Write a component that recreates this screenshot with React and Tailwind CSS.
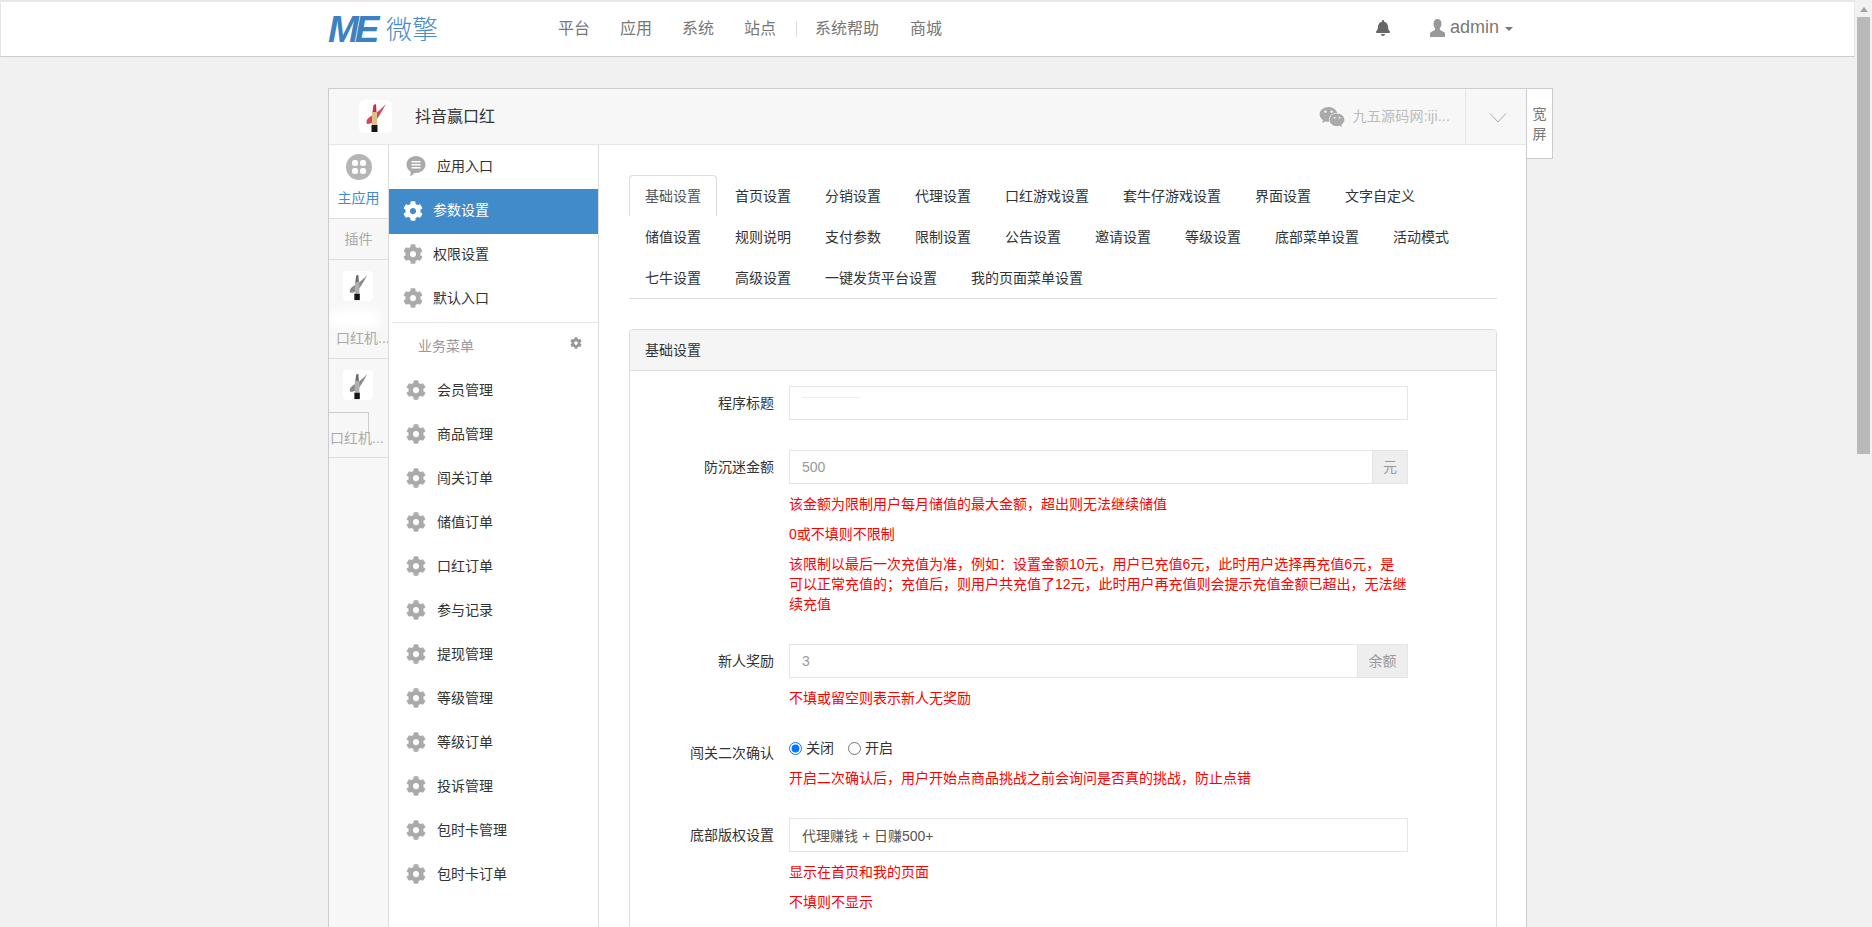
import { FaBell, FaCog, FaWeixin } from 'react-icons/fa';

const font = "font-['Liberation_Sans','Noto_Sans_CJK_SC',sans-serif]";

const tabRows = [
  ['基础设置', '首页设置', '分销设置', '代理设置', '口红游戏设置', '套牛仔游戏设置', '界面设置', '文字自定义'],
  ['储值设置', '规则说明', '支付参数', '限制设置', '公告设置', '邀请设置', '等级设置', '底部菜单设置', '活动模式'],
  ['七牛设置', '高级设置', '一键发货平台设置', '我的页面菜单设置'],
];

const bizMenu = ['会员管理', '商品管理', '闯关订单', '储值订单', '口红订单', '参与记录', '提现管理', '等级管理', '等级订单', '投诉管理', '包时卡管理', '包时卡订单'];

// little lipstick logo, red in the header and grey in the side strip
const Lipstick = ({ grey = false, size = 33 }) => (
  <svg width={size} height={size} viewBox="0 0 33 33" className="shrink-0">
    <rect width="33" height="33" rx="5" fill="#fff" />
    <path d="M27 4C24 9 20 17 17 20C14 23 11 24 8 24C6 20 10 17 14 15C19 12 23 8 27 4Z" fill={grey ? '#8a8a8a' : '#d8455f'} />
    <path d="M13.5 12L14.5 5L17 4L17.5 12Z" fill={grey ? '#6e6e6e' : '#c2304c'} />
    <rect x="13" y="12" width="5" height="13" fill={grey ? '#b0b0b0' : '#dcc08a'} />
    <rect x="12.500" y="25" width="6" height="7" fill="#151515" />
  </svg>
);

const MenuRow = ({ label }) => (
  <div className="flex h-[44px] items-center gap-[11px] pl-[17px] text-[14px] text-[#333]">
    <FaCog className="text-[20px] text-[#aaa]" />
    <span>{label}</span>
  </div>
);

const Help = ({ children }) => <p className="mt-[10px] text-[14px] leading-[20px] text-[#f00]">{children}</p>;

const Field = ({ label, labelClass = 'pt-[7px]', className = '', children }) => (
  <div className={`mb-[30px] flex ${className}`}>
    <label className={`w-[144px] shrink-0 text-right text-[14px] leading-[20px] text-[#333] ${labelClass}`}>{label}</label>
    <div className="ml-[15px] w-[619px] shrink-0">{children}</div>
  </div>
);

const TextInput = ({ value, muted, addon, addonClass }) => (
  <div className="flex h-[34px]">
    <input
      readOnly
      value={value}
      className={`h-full min-w-0 flex-1 border border-[#e5e5e5] bg-white px-[12px] text-[14px] outline-none ${muted ? 'text-[#999]' : 'text-[#555]'}`}
    />
    {addon && (
      <span className={`flex items-center justify-center border border-l-0 border-[#e5e5e5] bg-[#eee] text-[14px] text-[#999] ${addonClass}`}>{addon}</span>
    )}
  </div>
);

export default function App() {
  return (
    <div className={`flex h-[927px] overflow-hidden bg-[#f1f1f1] ${font}`}>
      <div className="w-[1855px] shrink-0">
        {/* top nav */}
        <nav className="flex h-[57px] items-center border border-t-[2px] border-[#e7e7e7] border-b-[#ccc] bg-white pl-[327px]">
          <div className="flex w-[110px] items-center">
            <span className="w-[58px] shrink-0 text-[37px] leading-none font-bold tracking-[-4px] text-[#3d82c0] italic">ME</span>
            <span className="mt-[2px] text-[26px] leading-none font-light whitespace-nowrap text-[#4a8cc6]">微擎</span>
          </div>
          <div className="ml-[105px] flex items-center text-[16px] text-[#777]">
            <a className="px-[15px]">平台</a>
            <a className="px-[15px]">应用</a>
            <a className="px-[15px]">系统</a>
            <a className="px-[15px]">站点</a>
            <span className="mr-[3px] ml-[5px] h-[16px] w-px bg-[#ddd]" />
            <a className="px-[15px]">系统帮助</a>
            <a className="ml-px px-[15px]">商城</a>
          </div>
          <div className="ml-auto flex items-center pr-[341px] text-[#777]">
            <FaBell className="-mt-[2px] text-[16px] text-[#666]" />
            <svg width="15" height="18" viewBox="0 0 15 18" className="-mt-[2px] ml-[39px]">
              <path d="M7.500 0C10 0 11.500 2 11.500 4.800C11.500 7 10.600 8.500 9.800 9.400C9.600 10.500 10 11 11.500 11.800C13.500 12.800 15 13.300 15 15V18H0V15C0 13.300 1.500 12.800 3.500 11.800C5 11 5.400 10.500 5.200 9.400C4.400 8.500 3.500 7 3.500 4.800C3.500 2 5 0 7.500 0Z" fill="#999" />
            </svg>
            <span className="-mt-[4px] ml-[5px] text-[18px] leading-none">admin</span>
            <span className="ml-[6px] h-0 w-0 border-x-[4px] border-t-[4px] border-x-transparent border-t-[#777]" />
          </div>
        </nav>

        <div className="flex items-start pt-[31px] pl-[328px]">
          {/* app panel */}
          <div className="w-[1199px] shrink-0 border border-[#ccc]">
            <header className="flex h-[56px] items-center border-b border-[#e7e7e7] bg-[#f7f7f7] pl-[30px]">
              <Lipstick />
              <span className="ml-[23px] text-[16px] text-[#333]">抖音赢口红</span>
              <div className="ml-auto flex items-center text-[14px] text-[#bbb]">
                <FaWeixin className="text-[26px] text-[#aaa]" />
                <span className="ml-[8px] tracking-[0.2px]">九五源码网:iji...</span>
              </div>
              <div className="ml-[15px] flex h-full w-[61px] items-center justify-center border-l border-[#e7e7e7] pt-[2px] pl-[3px]">
                <svg width="18" height="12" viewBox="0 0 18 12">
                  <path d="M1 1.500L9 10L17 1.500" fill="none" stroke="#aaa" strokeWidth="1" />
                </svg>
              </div>
            </header>

            <div className="flex">
              {/* app strip */}
              <aside className="w-[60px] shrink-0 border-r border-[#ddd] bg-[#f7f7f7]">
                <div className="flex h-[74px] flex-col items-center border-b border-[#ddd] bg-white pt-[9px]">
                  <svg width="26" height="26" viewBox="0 0 26 26">
                    <circle cx="13" cy="13" r="13" fill="#b5b5b5" />
                    <rect x="6" y="6" width="6" height="6" rx="2.500" fill="#fff" />
                    <rect x="14" y="6" width="6" height="6" rx="2.500" fill="#fff" />
                    <rect x="6" y="14" width="6" height="6" rx="2.500" fill="#fff" />
                    <rect x="14" y="14" width="6" height="6" rx="2.500" fill="#fff" />
                  </svg>
                  <span className="mt-[8px] text-[14px] leading-[20px] whitespace-nowrap text-[#428bca]">主应用</span>
                </div>
                <div className="flex h-[41px] items-center justify-center border-b border-[#ddd] text-[14px] text-[#aaa]">插件</div>
                <div className="relative h-[99px] overflow-hidden border-b border-[#ddd]">
                  <div className="flex justify-center pt-[11px] pr-[2px]">
                    <Lipstick grey size={30} />
                  </div>
                  <div className="absolute top-[50px] left-0 h-[18px] w-[50px] bg-white blur-[4px]" />
                  <div className="absolute top-[68px] left-[7px] text-[14px] leading-[20px] whitespace-nowrap text-[#aaa]">口红机...</div>
                </div>
                <div className="relative h-[99px] overflow-hidden border-b border-[#ddd]">
                  <div className="flex justify-center pt-[11px] pr-[2px]">
                    <Lipstick grey size={30} />
                  </div>
                  <div className="absolute top-[53px] left-0 h-[22px] w-[40px] border-t border-r border-[#ccc]" />
                  <div className="absolute top-[69px] left-[1px] text-[14px] leading-[20px] whitespace-nowrap text-[#aaa]">口红机...</div>
                </div>
              </aside>

              {/* menu column */}
              <aside className="w-[210px] shrink-0 border-r border-[#ddd] bg-white">
                <div className="flex h-[44px] items-center gap-[11px] pb-[2px] pl-[17px] text-[14px] text-[#333]">
                  <svg width="20" height="22" viewBox="0 0 20 22">
                    <path d="M10 1C15.200 1 19.500 4.800 19.500 9.500C19.500 14.200 15.200 18 10 18C9.500 18 9 18 8.500 17.900C7 19.500 5.500 20.500 4 21C4.600 19.500 4.800 18 4.700 16.500C2.100 15 .5 12.400 .5 9.500C.5 4.800 4.800 1 10 1Z" fill="#aaa" />
                    <rect x="5.500" y="6" width="9" height="1.500" fill="#fff" />
                    <rect x="5.500" y="9" width="9" height="1.500" fill="#fff" />
                    <rect x="5.500" y="12" width="9" height="1.500" fill="#fff" />
                  </svg>
                  <span>应用入口</span>
                </div>
                <div className="flex h-[45px] items-center gap-[10px] bg-[#428bca] pb-[2px] pl-[14px] text-[14px] text-white">
                  <FaCog className="text-[20px]" />
                  <span>参数设置</span>
                </div>
                <div className="flex h-[42px] items-center gap-[10px] pb-[2px] pl-[14px] text-[14px] text-[#333]">
                  <FaCog className="text-[20px] text-[#aaa]" />
                  <span>权限设置</span>
                </div>
                <div className="flex h-[44px] items-center gap-[10px] pl-[14px] text-[14px] text-[#333]">
                  <FaCog className="text-[20px] text-[#aaa]" />
                  <span>默认入口</span>
                </div>
                <div className="mt-[2px] ml-[3px] h-px bg-[#e7e7e7]" />
                <div className="flex h-[45px] items-center justify-between pt-[2px] pr-[16px] pl-[29px] text-[14px] text-[#999]">
                  <span>业务菜单</span>
                  <FaCog className="-mt-[7px] text-[12px] text-[#999]" />
                </div>
                {bizMenu.map((name) => (
                  <MenuRow key={name} label={name} />
                ))}
              </aside>

              {/* settings */}
              <main className="min-w-0 flex-1 bg-white pt-[30px] pr-[29px] pb-[200px] pl-[30px]">
                <div className="mb-[30px] border-b border-[#ddd]">
                  {tabRows.map((row, r) => (
                    <div key={r} className="flex h-[41px]">
                      {row.map((tab, i) => (
                        <a
                          key={tab}
                          className={`mr-[2px] flex h-[41px] items-center rounded-t-[4px] border border-b-0 px-[15px] text-[14px] ${r === 0 && i === 0 ? 'border-[#ddd] text-[#555]' : 'border-transparent text-[#333]'}`}
                        >
                          {tab}
                        </a>
                      ))}
                    </div>
                  ))}
                </div>

                <section className="rounded-[4px] border border-[#ddd]">
                  <div className="flex h-[41px] items-center rounded-t-[4px] border-b border-[#ddd] bg-[#f5f5f5] px-[15px] text-[14px] text-[#333]">基础设置</div>
                  <div className="pt-[15px]">
                    <Field label="程序标题">
                      <div className="relative">
                        <TextInput value="" />
                        <div className="absolute top-[11px] left-[13px] h-px w-[58px] bg-[#eee]" />
                      </div>
                    </Field>
                    <Field label="防沉迷金额">
                      <TextInput value="500" muted addon="元" addonClass="w-[35px]" />
                      <Help>该金额为限制用户每月储值的最大金额，超出则无法继续储值</Help>
                      <Help>0或不填则不限制</Help>
                      <Help>该限制以最后一次充值为准，例如：设置金额10元，用户已充值6元，此时用户选择再充值6元，是可以正常充值的；充值后，则用户共充值了12元，此时用户再充值则会提示充值金额已超出，无法继续充值</Help>
                    </Field>
                    <Field label="新人奖励">
                      <TextInput value="3" muted addon="余额" addonClass="w-[50px]" />
                      <Help>不填或留空则表示新人无奖励</Help>
                    </Field>
                    <Field label="闯关二次确认" labelClass="pt-[5px]" className="mt-[3px]">
                      <div className="flex h-[20px] items-center text-[14px] text-[#333]">
                        <input type="radio" name="confirm" defaultChecked className="m-0 h-[13px] w-[13px]" />
                        <span className="ml-[4px]">关闭</span>
                        <input type="radio" name="confirm" className="m-0 ml-[14px] h-[13px] w-[13px]" />
                        <span className="ml-[4px]">开启</span>
                      </div>
                      <Help>开启二次确认后，用户开始点商品挑战之前会询问是否真的挑战，防止点错</Help>
                    </Field>
                    <Field label="底部版权设置">
                      <TextInput value="代理赚钱 + 日赚500+" />
                      <Help>显示在首页和我的页面</Help>
                      <Help>不填则不显示</Help>
                    </Field>
                  </div>
                </section>
              </main>
            </div>
          </div>

          <div className="flex h-[71px] w-[26px] shrink-0 flex-col items-center justify-center border border-l-0 border-[#ccc] bg-white text-[14px] leading-[20px] text-[#777]">
            <span>宽</span>
            <span>屏</span>
          </div>
        </div>
      </div>

      {/* page scrollbar */}
      <div className="ml-[2px] flex w-[13px] shrink-0 flex-col items-center">
        <div className="mt-[7px] h-0 w-0 border-x-[4px] border-b-[5px] border-x-transparent border-b-[#a3a3a3]" />
        <div className="mt-[5px] h-[437px] w-full bg-[#b9b9b9]" />
      </div>
    </div>
  );
}
